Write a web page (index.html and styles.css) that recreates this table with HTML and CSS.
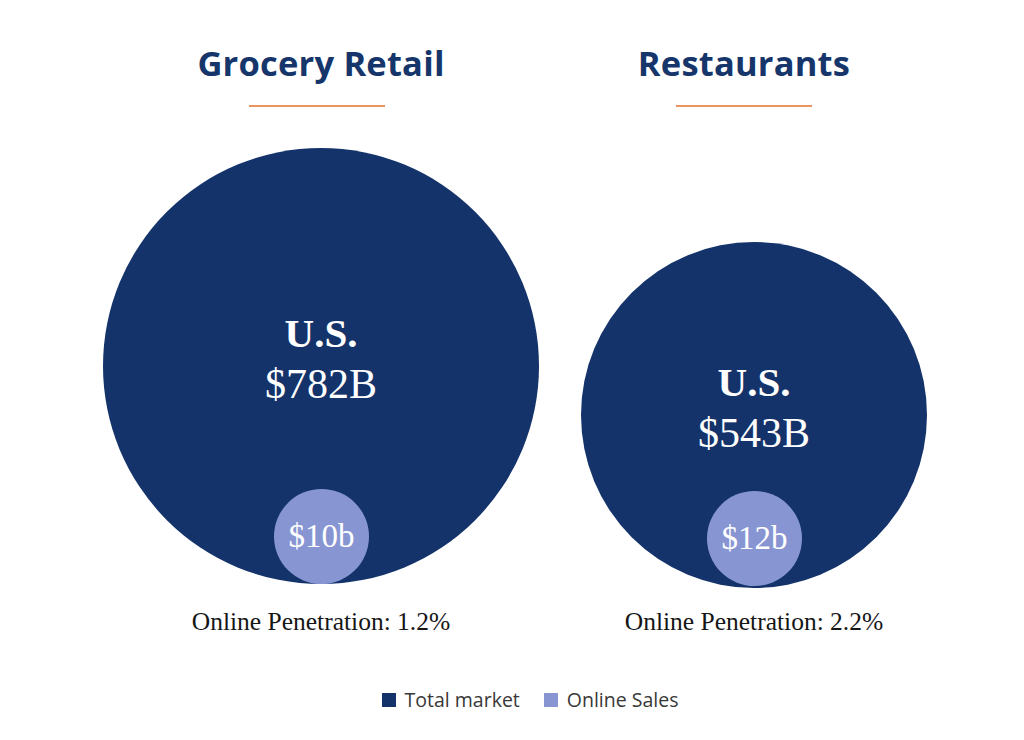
FILE: index.html
```html
<!DOCTYPE html>
<html>
<head>
<meta charset="utf-8">
<link rel="stylesheet" href="styles.css">
</head>
<body>
<div class="page">
  <div class="chart">
    <div class="head">
      <h2 class="title">Grocery Retail</h2>
      <div class="rule rule-left"></div>
    </div>
    <div class="head head-right">
      <h2 class="title">Restaurants</h2>
      <div class="rule"></div>
    </div>

    <div class="bubble bubble-lg">
      <div class="label"><span class="region">U.S.</span><span class="value">$782B</span></div>
      <div class="online">$10b</div>
    </div>
    <div class="bubble bubble-md">
      <div class="label"><span class="region">U.S.</span><span class="value">$543B</span></div>
      <div class="online">$12b</div>
    </div>

    <p class="pen">Online Penetration: 1.2%</p>
    <p class="pen pen-right">Online Penetration: 2.2%</p>
  </div>

  <div class="legend">
    <span class="key"><i class="swatch swatch-total"></i>Total market</span>
    <span class="key"><i class="swatch swatch-online"></i>Online Sales</span>
  </div>
</div>
</body>
</html>
```

FILE: styles.css
```css
html, body {
  margin: 0;
  padding: 0;
  background: #ffffff;
}

.page {
  width: 1024px;
  height: 740px;
  padding-top: 40px;
  box-sizing: border-box;
}

.chart {
  display: grid;
  grid-template-columns: 436px 346px;
  column-gap: 42px;
  margin-left: 103px;
  align-items: end;
}

.head {
  display: flex;
  flex-direction: column;
  align-items: center;
  align-self: start;
}

.head-right {
  padding-right: 20px;
}

.title {
  margin: 0;
  font-family: "Open Sans", "Noto Sans", sans-serif;
  font-weight: 700;
  font-size: 34.5px;
  line-height: 46px;
  color: #16366b;
  letter-spacing: 0.2px;
}

.rule {
  width: 136px;
  height: 2px;
  background: #ea9462;
  margin-top: 19px;
}

.rule-left {
  margin-right: 8px;
}

.bubble {
  position: relative;
  border-radius: 50%;
  background: #13336a;
  display: flex;
  align-items: center;
  justify-content: center;
  justify-self: center;
  margin-top: 41px;
}

.bubble-lg {
  width: 436px;
  height: 436px;
}

.bubble-md {
  width: 346px;
  height: 346px;
  margin-bottom: -4px;
}

.label {
  display: flex;
  flex-direction: column;
  align-items: center;
  margin-top: -14px;
  color: #ffffff;
  font-family: "Liberation Serif", "Times New Roman", serif;
  font-size: 42px;
  line-height: 51px;
}

.region {
  font-weight: 700;
  font-size: 41px;
}

.online {
  position: absolute;
  left: 50%;
  bottom: 0;
  width: 95px;
  height: 95px;
  margin-left: -47px;
  border-radius: 50%;
  background: #8796d2;
  color: #ffffff;
  font-family: "Liberation Serif", "Times New Roman", serif;
  font-size: 33px;
  display: flex;
  align-items: center;
  justify-content: center;
}

.bubble-md .online {
  bottom: 2px;
}

.pen {
  margin: 23px 0 0;
  text-align: center;
  font-family: "Liberation Serif", "Times New Roman", serif;
  font-size: 25.5px;
  line-height: 30px;
  color: #161616;
}

.pen-right {
  margin-top: 18px;
}

.legend {
  display: flex;
  justify-content: center;
  gap: 24px;
  margin-top: 51px;
  padding-left: 36px;
  font-family: "Open Sans", "Noto Sans", sans-serif;
  font-size: 19.5px;
  line-height: 24px;
  color: #383838;
}

.key {
  display: flex;
  align-items: center;
  gap: 9px;
}

.swatch {
  display: inline-block;
  width: 14px;
  height: 14px;
}

.swatch-total {
  background: #13336a;
}

.swatch-online {
  background: #8796d2;
}
```
